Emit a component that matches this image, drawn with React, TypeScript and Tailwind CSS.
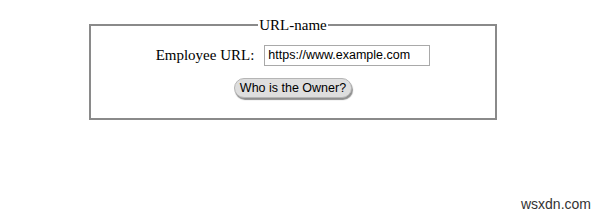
import React from 'react';

export default function App() {
  return (
    <div className="relative w-[600px] h-[215px] bg-white overflow-hidden">
      <div className="pt-[16px] pl-[89px]">
        <fieldset className="w-[408px] h-[104px] border-2 border-[#8a8a8a] px-3 pt-[10px] font-['Liberation_Serif',serif] text-[15px] text-black">
          <legend className="mx-auto px-[1px] leading-[18px]">URL-name</legend>
          <div className="flex items-center justify-center">
            <label className="mr-[10px]">Employee URL:</label>
            <input
              type="text"
              defaultValue="https://www.example.com"
              className="w-[166px] h-[21px] border border-[#a9a9a9] px-[3px] font-['Liberation_Sans',sans-serif] text-[12.5px] text-black outline-none"
            />
          </div>
          <div className="flex justify-center mt-[11px]">
            <button className="h-[20px] px-[5px] rounded-[10px] bg-[#dedede] border border-[#b5b5b5] shadow-[1px_2px_1px_#8f8f8f] font-['Liberation_Sans',sans-serif] text-[12.5px] leading-[16px] text-black">
              Who is the Owner?
            </button>
          </div>
        </fieldset>
      </div>
      <div className="absolute right-[9px] bottom-[3px] font-['Liberation_Sans',sans-serif] text-[14px] leading-[16px] text-[#333]">
        wsxdn.com
      </div>
    </div>
  );
}
